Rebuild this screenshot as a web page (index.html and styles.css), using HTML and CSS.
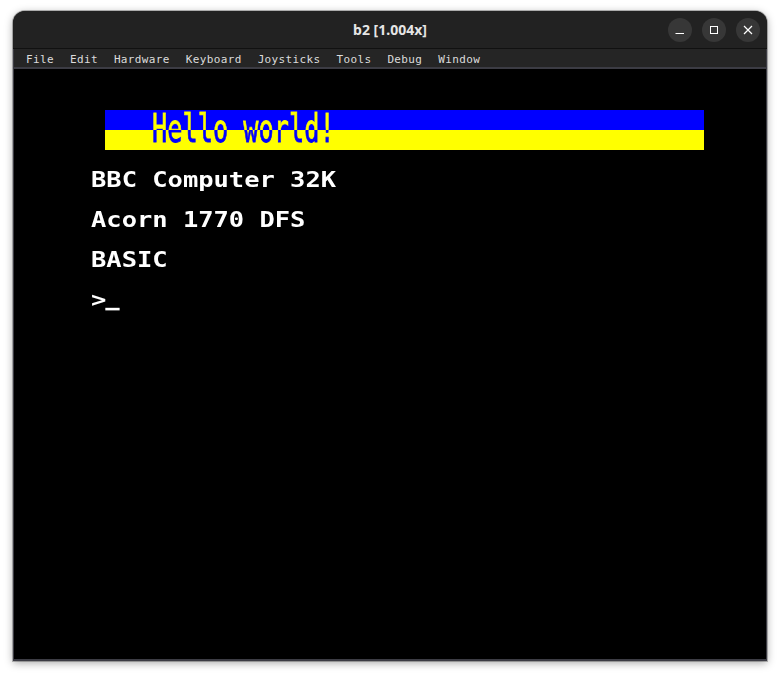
FILE: index.html
```html
<!DOCTYPE html>
<html lang="en">
<head>
<meta charset="utf-8">
<title>b2 [1.004x]</title>
<link rel="stylesheet" href="styles.css">
</head>
<body>
<div class="window">
  <header class="titlebar">
    <div class="title">b2 [1.004x]</div>
    <div class="controls">
      <button class="ctl" aria-label="Minimize"><svg width="10" height="10" viewBox="0 0 10 10"><path d="M0.5 8.5h8.5" stroke="#fff" stroke-width="1" fill="none"/></svg></button>
      <button class="ctl" aria-label="Maximize"><svg width="10" height="10" viewBox="0 0 10 10"><rect x="1.5" y="1.5" width="7" height="7" stroke="#fff" stroke-width="1" fill="none"/></svg></button>
      <button class="ctl" aria-label="Close"><svg width="10" height="10" viewBox="0 0 10 10"><path d="M1 1l8 8M9 1l-8 8" stroke="#fff" stroke-width="1.2" fill="none"/></svg></button>
    </div>
  </header>
  <nav class="menubar">
    <span>File</span><span>Edit</span><span>Hardware</span><span>Keyboard</span><span>Joysticks</span><span>Tools</span><span>Debug</span><span>Window</span>
  </nav>
  <main class="screen">
    <div class="banner"><span class="dbl">Hello world!</span></div>
    <div class="line">BBC Computer 32K</div>
    <div class="line">Acorn 1770 DFS</div>
    <div class="line">BASIC</div>
    <div class="line">&gt;<span class="cursor"></span></div>
  </main>
</div>
</body>
</html>
```
FILE: styles.css
```css
html, body { margin: 0; padding: 0; background: #fff; }
body { width: 780px; height: 677px; overflow: hidden; padding: 11px 13px 0; box-sizing: border-box; }
.window {
  width: 754px; height: 650px; box-sizing: border-box;
  display: flex; flex-direction: column;
  background: #222; border-radius: 12px 12px 0 0;
  box-shadow: 0 0 0 1px rgba(0,0,0,.25), 0 2px 9px rgba(0,0,0,.35);
  overflow: hidden;
}
.titlebar {
  height: 37px; flex: none; display: flex; align-items: center; justify-content: center;
  position: relative; background: #222; border-bottom: 1px solid #111;
}
.title { font: 700 14px "Noto Sans", sans-serif; color: #e6e6e6; }
.controls { position: absolute; right: 7px; top: 7px; display: flex; gap: 10px; }
.ctl { width: 24px; height: 24px; border: 0; padding: 0; border-radius: 50%; background: #373737; display: flex; align-items: center; justify-content: center; }
.menubar {
  height: 20px; box-sizing: border-box; flex: none; display: flex; gap: 16px; padding: 4px 0 0 12px; align-items: center;
  background: #252525; color: #dcdcdc;
  font: 11px/18px "DejaVu Sans Mono", monospace; letter-spacing: .36px;
  border-left: 1px solid #3c3c44; border-right: 1px solid #3c3c44; border-bottom: 2px solid #3c3c44;
}
.screen {
  flex: 1; background: #000;
  border: 1px solid #3c3c44; border-top: 0; border-bottom-width: 2px;
  padding: 41px 0 0 77px; color: #fff;
  display: flex; flex-direction: column;
}
.banner {
  margin: 0 62px 10px 14px; height: 40px; padding-left: 47px; flex: none;
  background: linear-gradient(#00f 50%, #ff0 50%);
  white-space: nowrap;
}
.dbl {
  display: block; width: 140px; height: 40px;
  font: 400 16px/40px "DejaVu Sans Mono", monospace;
  color: transparent;
  -webkit-text-stroke: .35px transparent;
  background: linear-gradient(#ff0 50%, #00f 50%);
  -webkit-background-clip: text; background-clip: text;
  transform-origin: 0 50%; transform: scale(1.58, 2.48);
}
.line {
  height: 40px; font: 700 16px/40px "DejaVu Sans Mono", monospace; white-space: nowrap;
  transform-origin: 0 50%; transform: scale(1.59, 1.3);
}
.cursor { display: inline-block; width: 9.5px; height: 2px; margin-left: -1px; background: #fff; vertical-align: -3px; }
```
